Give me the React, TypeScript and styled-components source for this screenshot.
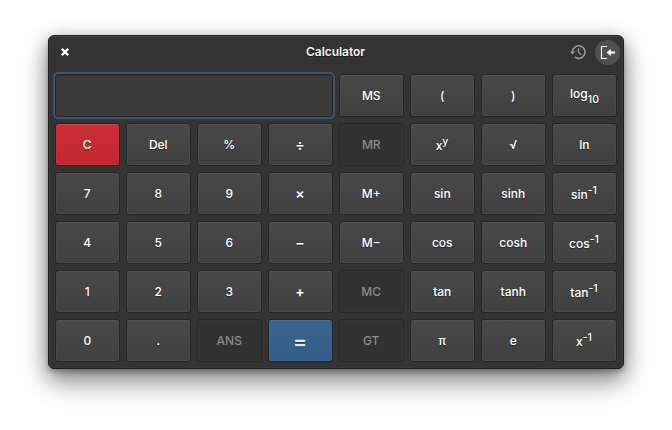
import React from "react";
import styled, { createGlobalStyle, css } from "styled-components";

const GlobalStyle = createGlobalStyle`
  * { box-sizing: border-box; }
  html, body { margin: 0; background: #fff; overflow: hidden; }
`;

const Desktop = styled.main`
  width: 672px;
  height: 430px;
  padding: 35px 48px 61px;
  background: #fff;
  font-family: Inter, "Open Sans", sans-serif;
`;

const Window = styled.section`
  width: 576px;
  height: 334px;
  display: flex;
  flex-direction: column;
  border: 1px solid #1f1f1f;
  border-radius: 6px;
  background: #333;
  color: #fff;
  box-shadow: inset 0 1px 0 #484848, inset 0 0 0 1px #383838,
    0 3px 4px rgba(0, 0, 0, 0.22), 0 14px 28px rgba(0, 0, 0, 0.35),
    0 5px 20px rgba(0, 0, 0, 0.3);
`;

const Header = styled.header`
  height: 32px;
  flex: none;
  display: grid;
  grid-template-columns: 60px 1fr 60px;
  align-items: center;
  padding: 0 3px 0 10px;
`;

const Title = styled.h1`
  margin: 0;
  padding-right: 8px;
  text-align: center;
  font-size: 12px;
  line-height: 16px;
  font-weight: 600;
  letter-spacing: -0.05px;
  color: #f4f4f4;
  text-shadow: 0 1px 1px rgba(0, 0, 0, 0.6);
`;

const HeaderActions = styled.div`
  display: flex;
  justify-content: flex-end;
  align-items: center;
  gap: 5px;
`;

const IconButton = styled.button<{ $active?: boolean }>`
  width: 25px;
  height: 25px;
  padding: 0;
  border: 0;
  border-radius: 50%;
  display: grid;
  place-items: center;
  color: ${(p) => (p.$active ? "#fff" : "#999")};
  background: ${(p) => (p.$active ? "#505050" : "transparent")};
`;

const CloseButton = styled.button`
  width: 12px;
  height: 16px;
  padding: 0;
  border: 0;
  display: grid;
  place-items: center;
  background: transparent;
`;

const Icon = styled.svg`
  display: block;
  overflow: visible;
`;

const Keypad = styled.div`
  display: grid;
  grid-template-columns: repeat(8, 65px);
  grid-template-rows: repeat(6, 43px);
  gap: 6px;
  padding: 6px;
`;

const Display = styled.output`
  grid-column: span 4;
  border: 1px solid #252525;
  border-radius: 3px;
  background: #3a3a3a;
  box-shadow: 0 0 0 2px #38546f, inset 0 1px 1px rgba(0, 0, 0, 0.2);
`;

type Tone = "normal" | "danger" | "primary" | "disabled";

const tones = {
  normal: css`
    color: #fff;
    border-color: #262626;
    background: linear-gradient(#494949, #404040);
    box-shadow: inset 0 1px 0 #515151, inset 0 0 0 1px #484848;
  `,
  danger: css`
    color: #fff;
    border-color: #2b2224;
    background: linear-gradient(#cb2f37, #c3262e);
    box-shadow: inset 0 1px 0 #d0434a, inset 0 0 0 1px #c92f37;
  `,
  primary: css`
    color: #d6e8fa;
    border-color: #222629;
    background: linear-gradient(#3c648e, #335d88);
    box-shadow: inset 0 1px 0 #4b7095, inset 0 0 0 1px #39648f;
  `,
  disabled: css`
    color: #8c8c8c;
    border-color: #272727;
    background: #313131;
    box-shadow: inset 0 0 0 1px #353535;
  `,
};

const Key = styled.button<{ $tone: Tone; $symbol?: boolean }>`
  padding: ${(p) => (p.$symbol ? "1px 1px 0 0" : "1px 0.5px 0 0")};
  border: 1px solid;
  border-radius: 3px;
  font-family: inherit;
  font-size: ${(p) => (p.$symbol ? 14 : 12)}px;
  line-height: 16px;
  font-weight: ${(p) => (p.$symbol ? 600 : 500)};
  text-align: center;
  text-shadow: ${(p) => (p.$tone === "disabled" ? "none" : "0 1px 1px rgba(0, 0, 0, 0.4)")};
  ${(p) => tones[p.$tone]}
`;

const RaisedKey = styled(Key)`
  padding: 3px 1px 0 0;

  sup {
    font-size: 10.5px;
    line-height: 0;
    vertical-align: 5px;
  }
`;

const LoweredKey = styled(Key)`
  padding: 0 0 4px;

  sub {
    font-size: 10.5px;
    line-height: 0;
    vertical-align: -5px;
  }
`;

const EqualsKey = styled(Key)`
  padding: 2px 1px 0 0;
  font-size: 21px;
  font-weight: 600;
`;

interface KeySpec {
  label: string;
  sup?: string;
  sub?: string;
  tone?: Tone;
  symbol?: boolean;
}

const keys: KeySpec[] = [
  { label: "MS" }, { label: "(" }, { label: ")" }, { label: "log", sub: "10" },

  { label: "C", tone: "danger" }, { label: "Del" }, { label: "%" }, { label: "÷", symbol: true },
  { label: "MR", tone: "disabled" }, { label: "x", sup: "y" }, { label: "√" }, { label: "ln" },

  { label: "7" }, { label: "8" }, { label: "9" }, { label: "×", symbol: true },
  { label: "M+" }, { label: "sin" }, { label: "sinh" }, { label: "sin", sup: "-1" },

  { label: "4" }, { label: "5" }, { label: "6" }, { label: "−", symbol: true },
  { label: "M−" }, { label: "cos" }, { label: "cosh" }, { label: "cos", sup: "-1" },

  { label: "1" }, { label: "2" }, { label: "3" }, { label: "+", symbol: true },
  { label: "MC", tone: "disabled" }, { label: "tan" }, { label: "tanh" }, { label: "tan", sup: "-1" },

  { label: "0" }, { label: "." }, { label: "ANS", tone: "disabled" }, { label: "=", tone: "primary" },
  { label: "GT", tone: "disabled" }, { label: "π" }, { label: "e" }, { label: "x", sup: "-1" },
];

function CalculatorKey({ label, sup, sub, tone = "normal", symbol }: KeySpec) {
  const Component = label === "=" ? EqualsKey : sup ? RaisedKey : sub ? LoweredKey : Key;
  return (
    <Component type="button" $tone={tone} $symbol={symbol}>
      {label}
      {sup && <sup>{sup}</sup>}
      {sub && <sub>{sub}</sub>}
    </Component>
  );
}

function CloseIcon() {
  return (
    <Icon width="8" height="8" viewBox="0 0 8 8">
      <path d="M.8 .8l6.4 6.4M7.2 .8l-6.4 6.4" stroke="#fff" strokeWidth="2.3" />
    </Icon>
  );
}

function HistoryIcon() {
  return (
    <Icon width="16" height="16" viewBox="0 0 16 16" fill="none" stroke="currentColor">
      <path d="M2.5 8A6.25 6.25 0 1 1 4.8 12.9" strokeWidth="1.6" />
      <path d="M0 7.5h5L2.5 10.5z" fill="currentColor" stroke="none" />
      <path d="M8.5 4.2v4l2.6 2.5" strokeWidth="1.3" />
    </Icon>
  );
}

function CollapseIcon() {
  return (
    <Icon width="15" height="15" viewBox="0 0 15 15" fill="none" stroke="currentColor">
      <path d="M7 1.5H1.5v12H7" strokeWidth="1.1" />
      <path d="M9 7.5h6" strokeWidth="2.1" />
      <path d="M6.5 7.5L10.8 4v7z" fill="currentColor" stroke="none" />
    </Icon>
  );
}

export default function App() {
  return (
    <>
      <GlobalStyle />
      <Desktop>
        <Window>
          <Header>
            <CloseButton aria-label="Close"><CloseIcon /></CloseButton>
            <Title>Calculator</Title>
            <HeaderActions>
              <IconButton aria-label="History"><HistoryIcon /></IconButton>
              <IconButton $active aria-label="Collapse"><CollapseIcon /></IconButton>
            </HeaderActions>
          </Header>
          <Keypad>
            <Display />
            {keys.map((key, index) => <CalculatorKey key={index} {...key} />)}
          </Keypad>
        </Window>
      </Desktop>
    </>
  );
}
